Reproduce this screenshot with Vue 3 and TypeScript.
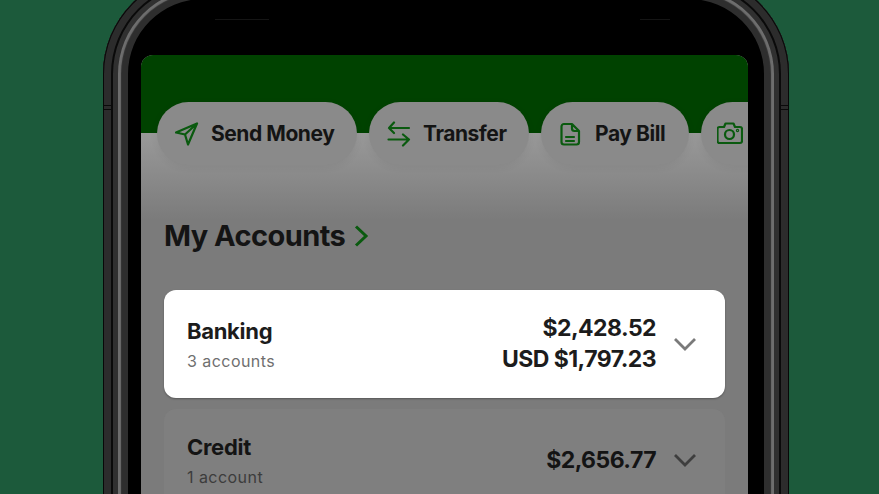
<script setup lang="ts">
const actions = [
  { id: 'send', label: 'Send Money' },
  { id: 'transfer', label: 'Transfer' },
  { id: 'bill', label: 'Pay Bill' },
  { id: 'deposit', label: '' }
];

const accounts = [
  { name: 'Banking', sub: '3 accounts', amounts: ['$2,428.52', 'USD $1,797.23'], active: true },
  { name: 'Credit', sub: '1 account', amounts: ['$2,656.77'], active: false }
];
</script>

<template>
  <div class="stage">
    <div class="phone">
      <div class="speaker left"></div>
      <div class="speaker right"></div>
      <div class="band band-l"></div>
      <div class="band band-r"></div>
      <div class="screen">
        <div class="header"></div>
        <div class="actions">
          <div v-for="a in actions" :key="a.id" class="pill" :class="a.id">
            <svg v-if="a.id === 'send'" class="icon" width="24" height="26" viewBox="0 0 24 26">
              <path d="M22 2.500 L1 11.500 L10 13.500 L13 23.500 Z M22 2.500 L10 13.500" />
            </svg>
            <svg v-else-if="a.id === 'transfer'" class="icon" width="24" height="26" viewBox="0 0 24 26">
              <path d="M7 1.500 L2 7 L7 12 M2 7 H22 M16 13.500 L22 18.500 L16 24.500 M22 18.500 H1.500" />
            </svg>
            <svg v-else-if="a.id === 'bill'" class="icon" width="24" height="24" viewBox="0 0 24 24">
              <path d="M13 2 H5 A2.500 2.500 0 0 0 2.500 4.500 V20 A2.500 2.500 0 0 0 5 22.500 H17.500 A2.500 2.500 0 0 0 20 20 V9 Z M13 2 V6.500 A2.500 2.500 0 0 0 15.500 9 H20 M7 15 H15 M7 19 H15" />
            </svg>
            <svg v-else class="icon" width="26" height="23" viewBox="0 0 26 23">
              <path d="M2.500 5 H7 L8.500 1.500 H16.500 L18 5 H23 A2 2 0 0 1 25 7 V19 A2 2 0 0 1 23 21 H2.500 A2 2 0 0 1 0.500 19 V7 A2 2 0 0 1 2.500 5 Z" />
              <circle cx="12.500" cy="12.500" r="4.500" />
              <circle cx="20.500" cy="8.500" r="0.600" />
            </svg>
            <span v-if="a.label">{{ a.label }}</span>
          </div>
        </div>
        <div class="title-row">
          <h2>My Accounts</h2>
          <svg width="15" height="22" viewBox="0 0 15 22"><path d="M2 1.500 L12 11 L2 20.500" /></svg>
        </div>
        <div class="cards">
          <div v-for="acc in accounts" :key="acc.name" class="card" :class="{ active: acc.active }">
            <div class="names">
              <div class="name">{{ acc.name }}</div>
              <div class="sub">{{ acc.sub }}</div>
            </div>
            <div class="amounts">
              <div v-for="n in acc.amounts" :key="n">{{ n }}</div>
            </div>
            <svg class="chev" width="24" height="14" viewBox="0 0 24 14"><path d="M2 2 L12 12 L22 2" /></svg>
          </div>
        </div>
      </div>
    </div>
  </div>
</template>

<style>
html, body { margin: 0; background: #1c5a3b; }
</style>

<style scoped>
.stage {
  width: 879px;
  height: 494px;
  overflow: hidden;
  position: relative;
  background: #1c5a3b;
  font-family: Inter, "Liberation Sans", sans-serif;
}

.phone {
  position: absolute;
  left: 103px;
  top: -26px;
  width: 686px;
  height: 800px;
  box-sizing: border-box;
  border-radius: 100px;
  background: #000;
  box-shadow:
    inset 0 0 0 1px #080808,
    inset 0 0 0 8px #2c2c2c,
    inset 0 0 0 10px #0a0a0a,
    inset 0 0 0 15px #303030,
    inset 0 0 1px 18px #6e6e6e,
    inset 0 0 0 25px #2e2e2e,
    inset 0 0 0 26px #000;
  padding: 81px 41px 0 38px;
}

.speaker {
  position: absolute;
  top: 45px;
  height: 1px;
  background: #151515;
}

.speaker.left { left: 112px; width: 54px; }
.speaker.right { left: 537px; width: 30px; }

.band {
  position: absolute;
  top: 131px;
  height: 3px;
  width: 9px;
  border-top: 1px solid #0a0a0a;
  border-bottom: 1px solid #0a0a0a;
}

.band-l { left: 1px; }
.band-r { right: 1px; }

.screen {
  height: 700px;
  background: linear-gradient(#999 78px, #7b7b7b 165px);
  border-radius: 12px 12px 0 0;
  overflow: hidden;
  position: relative;
}

.header {
  height: 78px;
  background: #004200;
  margin-bottom: -31px;
}

.actions {
  display: flex;
  gap: 12px;
  padding-left: 16px;
  width: 800px;
}

.pill {
  height: 63px;
  border-radius: 32px;
  background: #8a8a8a;
  box-shadow: 0 2px 8px rgba(0, 0, 0, 0.06);
  display: flex;
  align-items: center;
  gap: 12px;
  box-sizing: border-box;
  padding-left: 18px;
  font-size: 21px;
  font-weight: 700;
  letter-spacing: -0.45px;
  color: #141414;
  white-space: nowrap;
}

.pill.send { width: 200px; }
.pill.transfer { width: 160px; }
.pill.bill { width: 148px; }
.pill.deposit { width: 80px; padding-left: 16px; }

.icon path, .icon circle {
  fill: none;
  stroke: #0a5a0f;
  stroke-width: 2.200;
  stroke-linejoin: round;
  stroke-linecap: round;
}

.title-row {
  display: flex;
  align-items: center;
  gap: 9px;
  padding: 53px 0 0 23px;
}

.title-row h2 {
  margin: 0;
  font-size: 29px;
  line-height: 36px;
  font-weight: 700;
  letter-spacing: -0.55px;
  color: #141414;
}

.title-row svg path {
  fill: none;
  stroke: #0a5a0f;
  stroke-width: 3;
}

.cards {
  display: flex;
  flex-direction: column;
  gap: 11px;
  padding: 36px 23px 0;
}

.card {
  height: 102px;
  border-radius: 12px;
  background: #7f7f7f;
  display: flex;
  align-items: center;
  padding: 0 28px 0 23px;
  box-sizing: border-box;
}

.card.active {
  height: 108px;
  background: #fff;
  box-shadow: 0 1px 2px rgba(0, 0, 0, 0.3);
}

.names { flex: 1; }

.name {
  font-size: 22px;
  line-height: 30px;
  font-weight: 700;
  letter-spacing: -0.3px;
  color: #141414;
}

.active .name { color: #1c1c1c; }

.sub {
  font-size: 16px;
  line-height: 22px;
  letter-spacing: 0.45px;
  color: #3c3c3c;
  margin-top: 4px;
}

.active .sub { color: #6f6f6f; }

.amounts {
  text-align: right;
  font-size: 23px;
  line-height: 31px;
  font-weight: 700;
  letter-spacing: -0.55px;
  color: #141414;
}

.active .amounts { color: #1c1c1c; }

.chev { margin-left: 17px; }

.chev path {
  fill: none;
  stroke: #3e3e3e;
  stroke-width: 2.800;
}

.active .chev path { stroke: #7a7a7a; }
</style>
